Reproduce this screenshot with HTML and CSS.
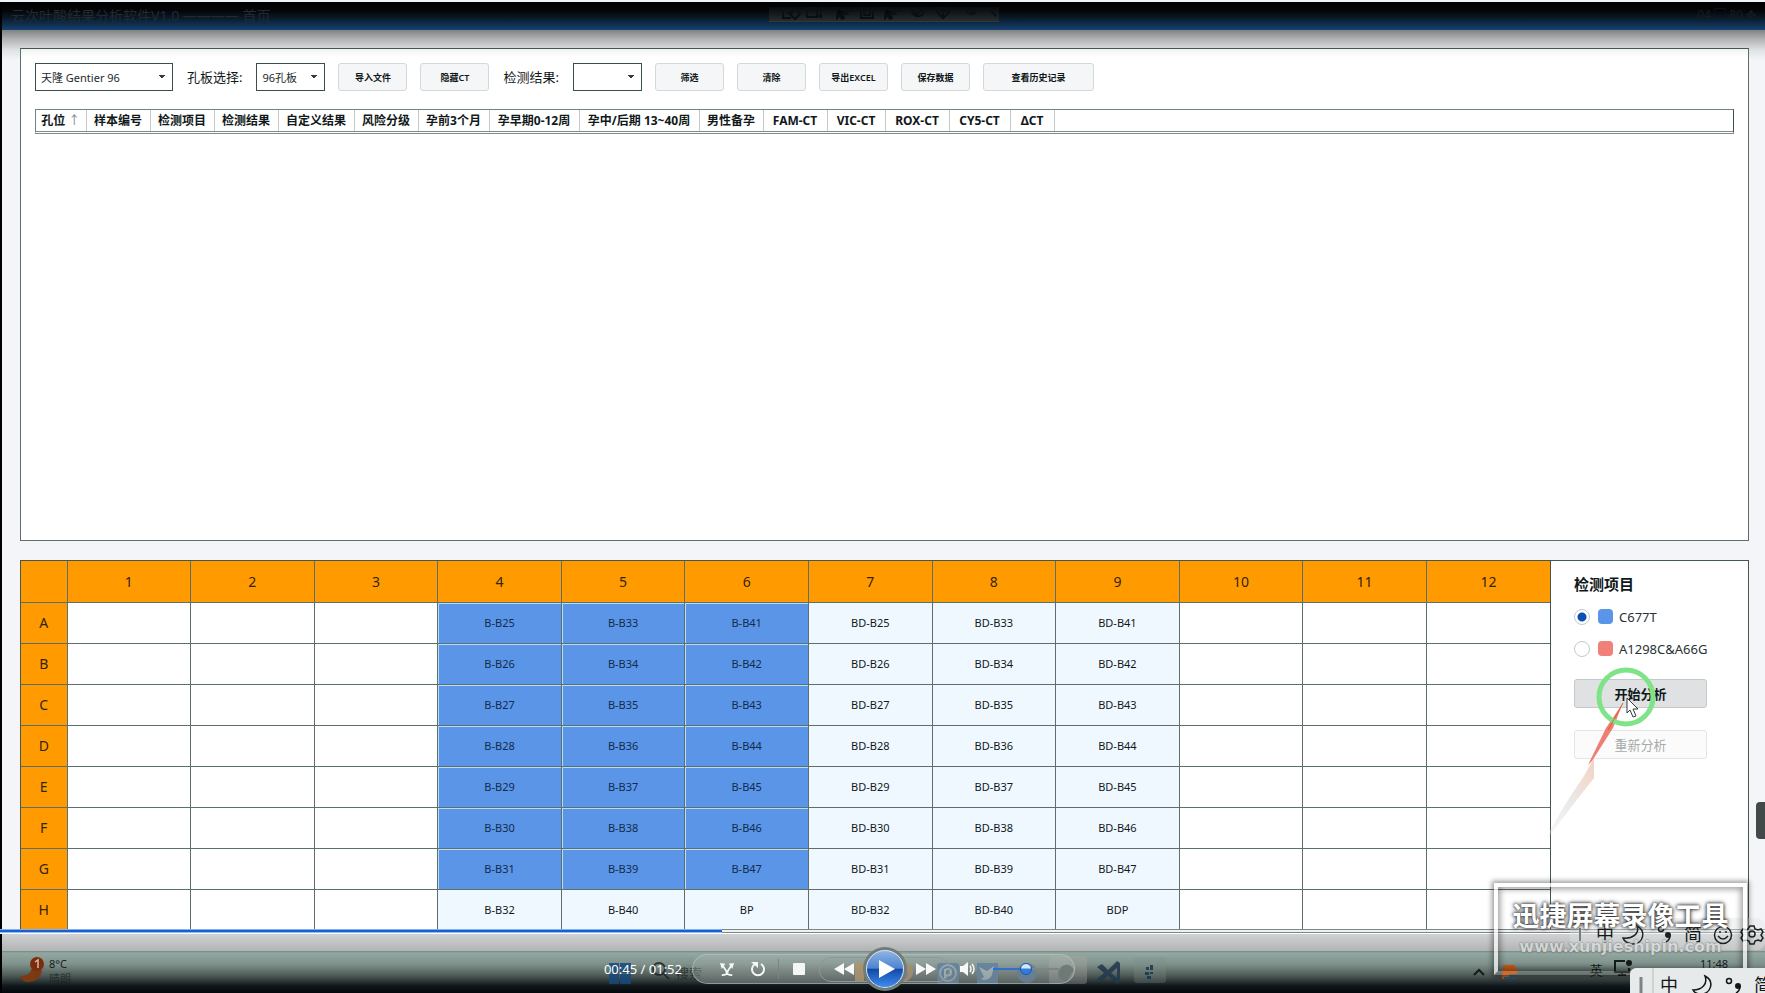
FILE: index.html
```html
<!DOCTYPE html>
<html lang="zh-CN">
<head>
<meta charset="utf-8">
<title>叶酸结果分析软件V1.0</title>
<link rel="stylesheet" href="styles.css">
</head>
<body>
<div class="screen">
  <header class="titlebar">
    <span class="app-title">云次叶酸结果分析软件V1.0 ———— 首页</span>
    <div class="recorder">
      <svg width="230" height="14" viewBox="0 0 230 14" fill="none" stroke="#0b0f13" stroke-width="2"><path d="M14 1v10h8M18 6h6M26 2l5 5-5 5-5-5zM38 1h10v9H38zM48 4l4-2v8l-4-2M92 0v11h12V0M95 3h6v5h-6zM144 3l4 5 6-8M144 0a6 6 0 1 0 10 0M168 0v5l6 6 6-6V0M174 0v9M170 4h8M198 0a5 5 0 1 0 9 0M201 3l4 3M226 0l-4 4 5 5"/><path fill="#05080b" d="M68 0v11l3-3 2 4 2-1-2-4h5zM116 0v11l3-3 2 4 2-1-2-4h5zM78 4h6M126 4h6"/></svg>
    </div>
    <span class="zoom-info">04 ▢ 80 ✥</span>
  </header>

  <main class="workspace">
    <section class="results">
      <form class="toolbar">
        <select class="pick pick-device" aria-label="仪器"><option>天隆 Gentier 96</option></select>
        <label class="field" for="plate">孔板选择:</label>
        <select class="pick pick-plate" id="plate"><option>96孔板</option></select>
        <button class="tool" type="button">导入文件</button>
        <button class="tool" type="button">隐藏CT</button>
        <label class="field" for="result">检测结果:</label>
        <select class="pick pick-result" id="result"><option></option></select>
        <button class="tool" type="button">筛选</button>
        <button class="tool" type="button">清除</button>
        <button class="tool" type="button">导出EXCEL</button>
        <button class="tool" type="button">保存数据</button>
        <button class="tool tool-wide" type="button">查看历史记录</button>
      </form>
      <div class="list">
        <table class="list-table">
          <colgroup><col class="c-well"><col class="c-four" span="3"><col class="c-custom"><col class="c-four"><col class="c-pre"><col class="c-early"><col class="c-late"><col class="c-four"><col class="c-four"><col class="c-vic"><col class="c-four"><col class="c-cy5"><col class="c-delta"></colgroup>
          <thead><tr>
            <th>孔位 <span class="sort">↑</span></th><th>样本编号</th><th>检测项目</th><th>检测结果</th><th>自定义结果</th><th>风险分级</th><th>孕前3个月</th><th>孕早期0-12周</th><th>孕中/后期 13~40周</th><th>男性备孕</th><th>FAM-CT</th><th>VIC-CT</th><th>ROX-CT</th><th>CY5-CT</th><th>ΔCT</th>
          </tr></thead>
        </table>
      </div>
    </section>

    <section class="plate">
      <table class="wells">
        <thead><tr><th class="corner"></th><th>1</th><th>2</th><th>3</th><th>4</th><th>5</th><th>6</th><th>7</th><th>8</th><th>9</th><th>10</th><th>11</th><th>12</th></tr></thead>
        <tbody>
          <tr><th>A</th><td></td><td></td><td></td><td class="on">B-B25</td><td class="on">B-B33</td><td class="on">B-B41</td><td class="has">BD-B25</td><td class="has">BD-B33</td><td class="has">BD-B41</td><td></td><td></td><td></td></tr>
          <tr><th>B</th><td></td><td></td><td></td><td class="on">B-B26</td><td class="on">B-B34</td><td class="on">B-B42</td><td class="has">BD-B26</td><td class="has">BD-B34</td><td class="has">BD-B42</td><td></td><td></td><td></td></tr>
          <tr><th>C</th><td></td><td></td><td></td><td class="on">B-B27</td><td class="on">B-B35</td><td class="on">B-B43</td><td class="has">BD-B27</td><td class="has">BD-B35</td><td class="has">BD-B43</td><td></td><td></td><td></td></tr>
          <tr><th>D</th><td></td><td></td><td></td><td class="on">B-B28</td><td class="on">B-B36</td><td class="on">B-B44</td><td class="has">BD-B28</td><td class="has">BD-B36</td><td class="has">BD-B44</td><td></td><td></td><td></td></tr>
          <tr><th>E</th><td></td><td></td><td></td><td class="on">B-B29</td><td class="on">B-B37</td><td class="on">B-B45</td><td class="has">BD-B29</td><td class="has">BD-B37</td><td class="has">BD-B45</td><td></td><td></td><td></td></tr>
          <tr><th>F</th><td></td><td></td><td></td><td class="on">B-B30</td><td class="on">B-B38</td><td class="on">B-B46</td><td class="has">BD-B30</td><td class="has">BD-B38</td><td class="has">BD-B46</td><td></td><td></td><td></td></tr>
          <tr><th>G</th><td></td><td></td><td></td><td class="on">B-B31</td><td class="on">B-B39</td><td class="on">B-B47</td><td class="has">BD-B31</td><td class="has">BD-B39</td><td class="has">BD-B47</td><td></td><td></td><td></td></tr>
          <tr><th>H</th><td></td><td></td><td></td><td class="has">B-B32</td><td class="has">B-B40</td><td class="has">BP</td><td class="has">BD-B32</td><td class="has">BD-B40</td><td class="has">BDP</td><td></td><td></td><td></td></tr>
        </tbody>
      </table>
      <aside class="side">
        <h2 class="side-title">检测项目</h2>
        <label class="choice"><input class="radio" type="radio" name="item" checked><span class="swatch swatch-blue"></span>C677T</label>
        <label class="choice"><input class="radio" type="radio" name="item"><span class="swatch swatch-red"></span>A1298C&amp;A66G</label>
        <button class="action" type="button">开始分析</button>
        <button class="action action-off" type="button" disabled>重新分析</button>
        <svg class="pointer" width="130" height="190" viewBox="0 0 130 190">
          <defs><linearGradient id="fade" x1="0" y1="1" x2="1" y2="0"><stop offset="0" stop-color="#e6e6e6" stop-opacity="0"/><stop offset=".5" stop-color="#eceae9"/><stop offset="1" stop-color="#f2d3c2"/></linearGradient></defs>
          <path d="M2 186Q20 150 44 116L54 98V118Q30 148 2 186z" fill="url(#fade)"/>
          <path d="M83 43L66 68L48 105L52 101L73 68z" fill="#ee7d74"/>
          <circle cx="86" cy="37" r="27" fill="none" stroke="#7fe388" stroke-width="5"/>
          <path d="M83 43L68 70" stroke="#e0602f" stroke-width="1"/>
          <path d="M87 38v15l3-3 3 7 3-1-3-7h5z" fill="#fff" stroke="#333b40" stroke-width="1"/>
        </svg>
      </aside>
    </section>
  </main>

  <footer class="player">
    <div class="seek"><div class="seek-done" style="width:40.9%"></div></div>
    <div class="taskbar">
      <div class="weather">
        <svg width="26" height="28" viewBox="0 0 26 28"><path d="M1 20q9 0 11-8l10 2q-2 12-14 12-6 0-7-6z" fill="#7b3a12"/><circle cx="17" cy="8" r="7" fill="#7c2c0c"/><path d="M15 6l3-2v8" fill="none" stroke="#d5b9a8" stroke-width="1.5"/></svg>
        <span>8°C<br><span class="sky">晴朗</span></span>
      </div>
      <svg class="apps" width="560" height="42" viewBox="0 0 560 42">
        <path d="M0 12h10v10H0zM11 12h11v10H11zM0 23h10v10H0zM11 23h11v10H11z" fill="#174a7d"/>
        <circle cx="50" cy="18" r="6" fill="none" stroke="#20282a" stroke-width="2"/><path d="M54 22l6 6" stroke="#20282a" stroke-width="2"/>
        <text class="search" x="67" y="27">搜索</text>
        <path d="M246 12h9v18h-9z" fill="#b98645"/><circle cx="294" cy="21" r="10" fill="#ac7d43"/><circle cx="294" cy="23" r="5" fill="#5474a8"/>
        <rect x="328" y="12" width="22" height="21" rx="3" fill="#3e6695"/><circle cx="339" cy="22" r="8" fill="none" stroke="#91a8b9" stroke-width="2"/><path d="M336 27v-8q6-3 6 2t-5 3" fill="none" stroke="#a9b9c2" stroke-width="2"/>
        <rect x="368" y="12" width="21" height="21" fill="#3d6999"/><path d="M370 16l8 4 7-5-2 9q-4 7-11 4l3-2z" fill="#a6b6bd"/>
        <circle cx="418" cy="22" r="10" fill="#3c648f"/>
        <rect x="440" y="5" width="38" height="28" rx="3" fill="#b2aaa4" opacity=".4"/><path d="M449 22q3-10 11-8 7 4 3 8l-6 8q-8 0-8-8z" fill="#4c5956"/>
        <path d="M488 16l5-3 6 6 9-9 3 2v19l-3 2-9-8-6 5-5-2 7-6zM508 17l-6 5 6 5z" fill="#21384c" fill-rule="evenodd"/>
        <rect x="525" y="6" width="32" height="26" rx="3" fill="#829089" opacity=".35"/><path d="M537 16h3v3h-3zM541 14h3v5h-3zM536 21h4v3h-4zM541 21h3v2h-3zM538 25h4v3h-4z" fill="#183850"/>
      </svg>
      <div class="tray">
        <svg width="48" height="26" viewBox="0 0 48 26"><path d="M2 16l5-5 5 5" fill="none" stroke="#151b1b" stroke-width="2"/><path d="M31 6h11l3 4v5H33l-3 5zM31 13h6v7h-6z" fill="#c15a18"/><path d="M32 19h6m1 0h5" stroke="#24557d" stroke-width="2"/></svg>
        <span class="lang">英</span>
        <svg width="22" height="18" viewBox="0 0 22 18"><path d="M12 2H2v11h14V9M5 16h8M9 13v3" fill="none" stroke="#151b1b" stroke-width="2"/><circle cx="16" cy="4" r="3" fill="#151b1b"/></svg>
        <span class="clock">11:48</span>
      </div>
    </div>
    <div class="deck">
      <span class="time">00:45 / 01:52</span>
      <div class="controls">
        <button class="ctl" type="button" aria-label="随机播放"><svg width="14" height="14" viewBox="0 0 16 16"><path d="M2 15q7 0 7-5l4-6M14 15q-7 0-7-5L3 4" fill="none" stroke="#f4f6f5" stroke-width="2"/><path d="M0 1l6 1-4 6zM16 1l-6 1 4 6z" fill="#f4f6f5"/></svg></button>
        <button class="ctl" type="button" aria-label="重复"><svg width="16" height="16" viewBox="0 0 16 16"><path d="M11 3a6 6 0 1 1-6 0" fill="none" stroke="#f4f6f5" stroke-width="2"/><path d="M1 1h7v6z" fill="#f4f6f5"/></svg></button>
        <span class="split"></span>
        <button class="ctl" type="button" aria-label="停止"><svg width="14" height="14" viewBox="0 0 14 14"><rect x="1" y="1" width="12" height="12" rx="1" fill="#f4f6f5"/></svg></button>
        <div class="transport">
          <button class="ctl" type="button" aria-label="后退"><svg width="20" height="12" viewBox="0 0 20 12"><path d="M10 0v12L0 6zM20 0v12L10 6z" fill="#f8f8f8"/></svg></button>
          <button class="play" type="button" aria-label="播放"><svg width="16" height="18" viewBox="0 0 16 18"><path d="M0 0l16 9-16 9z" fill="#fff"/></svg></button>
          <button class="ctl" type="button" aria-label="前进"><svg width="20" height="12" viewBox="0 0 20 12"><path d="M0 0v12l10-6zM10 0v12l10-6z" fill="#f8f8f8"/></svg></button>
        </div>
        <button class="ctl" type="button" aria-label="静音"><svg width="16" height="16" viewBox="0 0 16 16"><path d="M0 5h3l5-4v14l-5-4H0z" fill="#f8f8f8"/><path d="M10 5q2 3 0 6M12 3q4 5 0 10" fill="none" stroke="#f8f8f8" stroke-width="1.5"/></svg></button>
        <input class="volume" type="range" min="0" max="100" value="50" aria-label="音量">
      </div>
      <span></span>
    </div>
  </footer>

  <div class="drawer-grip"></div>

  <div class="ime ime-back">
    <svg width="195" height="32" viewBox="0 0 195 32" fill="none" stroke="#1b2122" stroke-width="1.5"><path d="M10 10v13" stroke="#777f7e" stroke-width="2"/><path d="M67 8c10 5 6 18-4 18-5 0-9-3-10-6 9 1 17-4 14-12z"/><circle cx="91" cy="11" r="2.5"/><circle cx="98" cy="17" r="3" fill="#1b2122" stroke="none"/><path d="M100 17q0 5-4 7"/><circle cx="153" cy="17" r="8.5"/><path d="M148 18q5 6 10 0M150 13v2M156 13v2"/><circle cx="182" cy="16" r="3"/><path d="M180 8h4l1 3 3 1 3-1 2 3-2 3 2 3-2 3-3-1-3 1-1 3h-4l-1-3-3-1-3 1-2-3 2-3-2-3 2-3 3 1 2-1z"/><text class="ime-text" x="26" y="23">中</text><text class="ime-text" x="114" y="23">简</text></svg>
  </div>
  <div class="watermark">
    <span class="wm-name">迅捷屏幕录像工具</span>
    <span class="wm-url">www.xunjieshipin.com</span>
  </div>
  <div class="ime ime-front">
    <svg width="135" height="25" viewBox="0 0 135 25" fill="none" stroke="#111617" stroke-width="1.5"><path d="M11 9v16" stroke="#7c8583" stroke-width="3"/><path d="M23 0v25" stroke="#b5bbba" stroke-width="1"/><path d="M75 8c10 5 6 18-4 18-4 0-7-2-8-4 9 0 15-6 12-14z"/><circle cx="99" cy="13" r="2.5"/><circle cx="108" cy="18" r="3" fill="#111617" stroke="none"/><path d="M110 18q0 5-4 7"/><text class="ime-text" x="30" y="24">中</text><text class="ime-text" x="124" y="24">简</text></svg>
  </div>
</div>
</body>
</html>
```
FILE: styles.css
```css
* { box-sizing: border-box; }

body {
  margin: 0;
  background: #f3f5f8;
  color: #10181a;
  font-family: "Noto Sans", "Noto Sans CJK SC", sans-serif;
  font-size: 12px;
}

button, select, input { font-family: inherit; }

.screen {
  position: relative;
  display: flex;
  flex-direction: column;
  height: 100vh;
  overflow: hidden;
  border-top: 2px solid #eef3f7;
}

.titlebar {
  display: flex;
  align-items: flex-start;
  justify-content: space-between;
  position: relative;
  flex: none;
  height: 28px;
  padding: 0 9px;
  border-left: 2px solid #000;
  background: linear-gradient(#000 0, #030507 30%, #0a1c2c 60%, #154272 100%);
}

.app-title { color: #222a31; font-size: 14px; line-height: 28px; }
.zoom-info { color: #171c21; font-size: 12px; line-height: 26px; }

.recorder {
  position: absolute;
  top: 5px;
  left: 50%;
  width: 230px;
  height: 15px;
  margin-left: -115px;
  background: linear-gradient(#07090b, #262c2e);
  border-bottom: 1px solid #30383b;
}

.workspace {
  display: flex;
  flex-direction: column;
  flex: 1;
  gap: 19px;
  min-height: 0;
  padding: 18px 16px 0 18px;
  border-left: 2px solid #000;
  background: linear-gradient(#808283 0, #b4b6b8 10px, #dfe2e4 20px, #f3f5f8 30px);
}

.results {
  flex: 1;
  padding: 14px;
  border: 1px solid #5d6f6b;
  border-top-color: #43564f;
  background: linear-gradient(#f0f3f0, #fff 8px);
}

.toolbar { display: flex; align-items: center; gap: 13px; height: 28px; }

.field { margin: 0 1px; font-size: 13px; line-height: 18px; white-space: nowrap; }

.pick {
  height: 28px;
  padding: 0 5px;
  border: 1px solid #3c504b;
  border-radius: 0;
  appearance: none;
  color: #222b2d;
  font-size: 11px;
  background-color: #fff;
  background-image:
    linear-gradient(to bottom right, #333b3d 50%, transparent 51%),
    linear-gradient(to bottom left, #333b3d 50%, transparent 51%);
  background-repeat: no-repeat;
  background-size: 3px 4px, 3px 4px;
  background-position: right 7px center, right 10px center;
}

.pick-device { width: 138px; }
.pick-plate, .pick-result { width: 69px; }

.tool {
  width: 69px;
  height: 28px;
  padding: 0;
  border: 1px solid #d3d8d9;
  border-radius: 3px;
  background: #f5f6f7;
  color: #10181a;
  font-size: 9px;
  font-weight: 600;
}

.tool-wide { width: 111px; }

.list {
  margin-top: 18px;
  border: 1px solid #72847f;
  border-right-color: #3c504b;
  border-bottom: 3px double #7f8c89;
}

.list-table { width: 1018px; table-layout: fixed; border-collapse: collapse; }
.c-well { width: 50px; }
.c-four { width: 64px; }
.c-custom { width: 76px; }
.c-pre { width: 71px; }
.c-early { width: 90px; }
.c-late { width: 120px; }
.c-vic { width: 58px; }
.c-cy5 { width: 61px; }
.c-delta { width: 44px; }

.list-table th {
  height: 21px;
  padding: 0;
  border-right: 1px solid #c4cbca;
  font-size: 12px;
  line-height: 20px;
  font-weight: 700;
  white-space: nowrap;
}

.sort { color: #788281; font-weight: 400; }

.plate {
  display: flex;
  flex: none;
  margin-bottom: -1px;
  background: #fff;
  border: 1px solid #43564f;
  border-bottom: 0;
}

.results { margin-bottom: 1px; }
.workspace { gap: 18px; }

.wells {
  flex: 1;
  width: 100%;
  table-layout: fixed;
  border-collapse: collapse;
  border-style: hidden;
  text-align: center;
}

.wells th, .wells td { height: 41px; padding: 0; border: 1px solid #5d6f6b; }
.wells th { background: #ff9b00; color: #33240c; font-size: 14px; font-weight: 400; }
.wells td { font-size: 11px; }
.wells .corner { width: 46px; }
.wells .has { background: #f0f8ff; }
.wells .on { background: #5a95e8; color: #132c4a; box-shadow: inset 1px 1px #b9dcf5; }

.side {
  position: relative;
  display: flex;
  flex-direction: column;
  align-items: flex-start;
  flex: none;
  width: 198px;
  padding: 12px 23px 0;
  border-left: 1px solid #43564f;
}

.side-title { margin: 0 0 9px; font-size: 15px; line-height: 22px; }

.choice {
  display: flex;
  align-items: center;
  height: 25px;
  margin-bottom: 7px;
  font-size: 13px;
  color: #2a3234;
}

.radio {
  appearance: none;
  width: 16px;
  height: 16px;
  margin: 0;
  border: 1px solid #c3cacc;
  border-radius: 50%;
  background: #fff;
}

.radio:checked { background: radial-gradient(#0d50b0 0 4px, #fff 5px); }

.swatch { width: 15px; height: 15px; margin: 0 6px 0 8px; border-radius: 4px; }
.swatch-blue { background: #5a95e8; }
.swatch-red { background: #f08078; }

.action {
  width: 133px;
  height: 29px;
  margin: 11px 0;
  padding: 0;
  border: 1px solid #c3c9ca;
  border-radius: 3px;
  background: #dfe1e2;
  color: #10181a;
  font-size: 13px;
  font-weight: 600;
}

.action-off { border-color: #e2e5e6; background: #fbfbfb; color: #a7abac; font-weight: 400; }

.pointer { position: absolute; left: -11px; top: 99px; pointer-events: none; }

.player {
  position: relative;
  flex: none;
  height: 64px;
  border-left: 2px solid #000;
  background: linear-gradient(#d9dadb 0, #b2b3b4 22px, #768782 22px, #92a8a1 24px, #7f918b 35px, #4c5855 47px, #10171b 57px, #03070b 100%);
}

.seek { height: 5px; margin-left: -2px; background: linear-gradient(#7c8785 1px, #edf1f1 1px 3px, #7c8785 3px 4px, #fff 4px); }
.seek-done { height: 4px; background: linear-gradient(#7cb3ee 1px, #1b5fd0 1px 3px, #8fc0f5 3px); }

.taskbar {
  position: absolute;
  inset: 22px 0 0 0;
  display: flex;
  justify-content: space-between;
  color: #151b1b;
}

.weather { display: flex; gap: 3px; padding: 5px 0 0 18px; font-size: 11px; line-height: 15px; }
.sky { opacity: .6; }
.apps { position: absolute; left: 50%; top: 0; margin-left: -275px; opacity: .85; }
.search { font-size: 13px; fill: #252d2d; }
.tray { display: flex; gap: 10px; align-items: flex-start; padding: 7px 37px 0 0; margin-left: auto; }
.tray svg { margin-top: 1px; }
.lang { margin: 2px 0 0 60px; font-size: 13px; line-height: 20px; }
.clock { margin-left: 55px; font-size: 11px; line-height: 12px; }

.deck {
  position: absolute;
  inset: 25px 0 auto 0;
  display: grid;
  grid-template-columns: 1fr auto 1fr;
  align-items: center;
}

.time { justify-self: end; margin-right: 10px; color: #fff; font-size: 13px; }

.controls {
  display: flex;
  align-items: center;
  width: 383px;
  height: 30px;
  padding: 0 14px 0 26px;
  border: 1px solid rgba(190, 204, 200, .6);
  border-radius: 15px;
  background: linear-gradient(rgba(190, 200, 196, .25), rgba(150, 158, 155, .5));
}

.ctl { display: flex; align-items: center; justify-content: center; flex: none; width: 16px; height: 20px; padding: 0; border: 0; background: none; }
.ctl + .ctl { margin-left: 15px; }
.split { width: 1px; height: 20px; margin: 0 12px; background: #7b8482; }

.transport {
  display: flex;
  align-items: center;
  justify-content: center;
  flex: none;
  gap: 12px;
  width: 131px;
  height: 25px;
  margin: 0 10px 0 12px;
  border: 1px solid #8e9895;
  border-radius: 12px;
}

.transport .ctl { width: 20px; margin: 0; }

.play {
  display: flex;
  align-items: center;
  justify-content: center;
  flex: none;
  width: 38px;
  height: 38px;
  padding: 0 0 0 5px;
  border: 1px solid #d5e1ef;
  border-radius: 50%;
  background: linear-gradient(#8db4e5 0, #4d83cf 48%, #1248a5 50%, #3f8cf0 100%);
  box-shadow: 0 0 0 3px #6f7d7a;
}

.volume {
  appearance: none;
  flex: none;
  width: 66px;
  height: 16px;
  margin: 0 0 0 17px;
  background: linear-gradient(90deg, #2e6fd0 50%, #7c8784 50%) no-repeat center / 100% 2px;
}

.volume::-webkit-slider-thumb {
  appearance: none;
  width: 12px;
  height: 12px;
  border: 1px solid #1f55a8;
  border-radius: 50%;
  background: linear-gradient(#d5e8fb 40%, #2f7de0 50%);
}

.drawer-grip {
  position: absolute;
  right: 0;
  top: 800px;
  width: 9px;
  height: 37px;
  border-radius: 4px 0 0 4px;
  background: #414a49;
}

.ime { position: absolute; right: 0; overflow: hidden; }
.ime svg { display: block; }
.ime-back { bottom: 43px; width: 195px; height: 32px; border-radius: 8px; background: rgba(225, 228, 229, .4); }
.ime-front { bottom: 0; width: 135px; height: 25px; border-radius: 6px 0 0 0; background: #e7eaeb; }
.ime-text { fill: #111617; stroke: none; font-size: 18px; }

.watermark {
  position: absolute;
  right: 18px;
  bottom: 18px;
  display: flex;
  flex-direction: column;
  align-items: center;
  width: 253px;
  height: 92px;
  padding-top: 12px;
  border: 4px solid rgba(255, 255, 255, .7);
  border-bottom-color: rgba(255, 255, 255, .12);
  box-shadow: 0 0 5px 2px rgba(0, 0, 0, .4), inset 0 0 6px 2px rgba(0, 0, 0, .4);
  color: #fff;
  white-space: nowrap;
}

.wm-name { font-size: 27px; line-height: 34px; font-weight: 700; text-shadow: 0 0 3px #222, 0 0 5px #444; }
.wm-url { margin-top: 5px; font-family: "DejaVu Sans", sans-serif; font-size: 16px; line-height: 18px; font-weight: 700; color: #d8dcdb; opacity: .8; text-shadow: 0 0 2px #444; }
```
